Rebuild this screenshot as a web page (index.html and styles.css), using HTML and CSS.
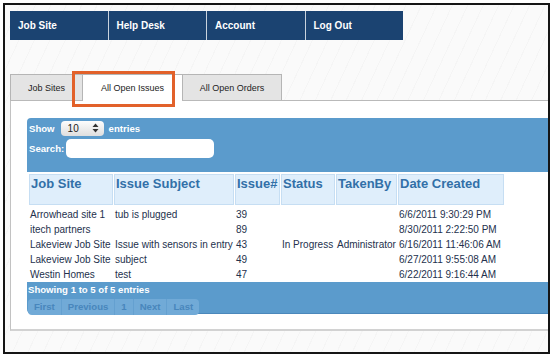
FILE: index.html
```html
<!DOCTYPE html>
<html lang="en">
<head>
    <meta charset="UTF-8">
    <meta name="viewport" content="width=device-width, initial-scale=1.0">
    <title>Open Issues</title>
    <link rel="stylesheet" href="styles.css">
</head>
<body>
    <div class="frame">
        <!-- Main menu -->
        <div class="nav">
            <a class="nav-item" href="#">Job Site</a>
            <a class="nav-item" href="#">Help Desk</a>
            <a class="nav-item" href="#">Account</a>
            <a class="nav-item" href="#">Log Out</a>
        </div>

        <!-- Tabs -->
        <div class="tabs">
            <div class="tab">Job Sites</div>
            <div class="tab active">All Open Issues</div>
            <div class="tab">All Open Orders</div>
        </div>
        <div class="highlight"></div>

        <div class="panel">
            <div class="dt-top">
                <div class="dt-row">
                    <span>Show</span>
                    <div class="select">
                        <span>10</span>
                        <svg width="7" height="10" viewBox="0 0 7 10"><path d="M3.5 0.5 L6.5 4 L0.5 4 Z M3.5 9.5 L6.5 6 L0.5 6 Z" fill="#333"/></svg>
                    </div>
                    <span>entries</span>
                </div>
                <div class="dt-row">
                    <span>Search:</span>
                    <div class="search"></div>
                </div>
            </div>

            <table class="issues">
                <thead>
                    <tr>
                        <th class="c1">Job Site</th>
                        <th class="c2">Issue Subject</th>
                        <th class="c3">Issue#</th>
                        <th class="c4">Status</th>
                        <th class="c5">TakenBy</th>
                        <th class="c6">Date Created</th>
                    </tr>
                </thead>
                <tbody>
                    <tr class="first"><td>Arrowhead site 1</td><td>tub is plugged</td><td>39</td><td></td><td></td><td>6/6/2011 9:30:29 PM</td></tr>
                    <tr><td>itech partners</td><td></td><td>89</td><td></td><td></td><td>8/30/2011 2:22:50 PM</td></tr>
                    <tr><td>Lakeview Job Site</td><td>Issue with sensors in entry</td><td>43</td><td>In Progress</td><td>Administrator</td><td>6/16/2011 11:46:06 AM</td></tr>
                    <tr><td>Lakeview Job Site</td><td>subject</td><td>49</td><td></td><td></td><td>6/27/2011 9:55:08 AM</td></tr>
                    <tr><td>Westin Homes</td><td>test</td><td>47</td><td></td><td></td><td>6/22/2011 9:16:44 AM</td></tr>
                </tbody>
            </table>

            <div class="dt-bottom">
                <div class="info">Showing 1 to 5 of 5 entries</div>
                <div class="pager">
                    <span>First</span>
                    <span>Previous</span>
                    <span>1</span>
                    <span>Next</span>
                    <span>Last</span>
                </div>
            </div>
        </div>
    </div>
</body>
</html>
```

FILE: styles.css
```css
body {
    margin: 0;
    background: #fff;
    font-family: "Liberation Sans", Arial, sans-serif;
}
.frame {
    position: relative;
    margin: 3px;
    width: 538px;
    height: 341px;
    padding: 6px 0 0 5px;
    border: 2px solid #151515;
    overflow: hidden;
    background-color: #fafafa;
    background-image: repeating-linear-gradient(115deg, rgba(255,255,255,0) 0 13px, rgba(0,0,0,0.018) 13px 14px);
}
/* Main menu */
.nav {
    display: flex;
    width: 393px;
    height: 29px;
    background: #1b4371;
}
.nav-item {
    flex: 1;
    color: #fff;
    font-weight: bold;
    font-size: 10px;
    text-decoration: none;
    padding: 9px 0 0 8px;
    border-left: 1px solid #c9d3de;
}
.nav-item:first-child {
    border-left: none;
}
/* Tabs */
.tabs {
    display: flex;
    margin-top: 34px;
    height: 26px;
    border-bottom: 1px solid #b9b9b9;
    width: 560px;
}
.tab {
    width: 72px;
    box-sizing: border-box;
    background: #e4e4e4;
    border: 1px solid #b5b5b5;
    border-bottom: none;
    border-right: none;
    font-size: 9px;
    color: #222;
    text-align: center;
    line-height: 26px;
}
.tab:last-child {
    border-right: 1px solid #b5b5b5;
}
.tab.active,
.tab:last-child {
    width: 100px;
}
.tab.active {
    background: #fff;
    height: 27px;
}
.highlight {
    position: absolute;
    left: 67px;
    top: 66px;
    width: 103px;
    height: 36px;
    box-sizing: border-box;
    border: 3px solid #e2612a;
}
/* Panel */
.panel {
    width: 560px;
    height: 211px;
    background: #fff;
    border-left: 1px solid #c2c2c2;
    border-bottom: 2px solid #d2d2d2;
    padding: 17px 0 0 16px;
}
.dt-top {
    background: #5b9bcc;
    border-radius: 4px 0 0 0;
    height: 54px;
    box-sizing: border-box;
    padding: 2px 0 0 2px;
    color: #fff;
    font-weight: bold;
    font-size: 9.6px;
}
.dt-row {
    display: flex;
    align-items: center;
    gap: 5px;
    height: 16px;
}
.dt-row + .dt-row {
    margin-top: 3px;
    height: 19px;
    gap: 2px;
}
.select {
    display: flex;
    align-items: center;
    justify-content: space-between;
    width: 43px;
    height: 15px;
    box-sizing: border-box;
    padding: 0 5px 0 7px;
    border-radius: 4px;
    background: linear-gradient(#fdfdfd, #dedede);
    color: #222;
    font-weight: normal;
    font-size: 10px;
    margin-left: 1px;
}
.search {
    width: 148px;
    height: 19px;
    background: #fff;
    border-radius: 5px;
}
/* Table */
.issues {
    border-collapse: separate;
    border-spacing: 1px 0;
    table-layout: fixed;
    margin: 2px 0 0 1px;
    font-size: 10px;
    color: #24314d;
}
.issues th {
    background: #dfeefb;
    border: 1px solid #c6def3;
    color: #3270a8;
    font-size: 13px;
    font-weight: bold;
    text-align: left;
    vertical-align: top;
    height: 31px;
    box-sizing: border-box;
    padding: 1px 1px 0 1px;
    white-space: nowrap;
}
.c1 { width: 84px; }
.c2 { width: 120px; }
.c3 { width: 45px; }
.c4 { width: 54px; }
.c5 { width: 61px; }
.c6 { width: 106px; }
.issues td {
    height: 15px;
    padding: 0 0 0 1px;
    white-space: nowrap;
}
.issues tr.first td {
    padding-top: 2px;
}
/* Footer */
.dt-bottom {
    background: #5b9bcc;
    border-bottom: 1px solid #4b88bb;
    border-radius: 0 0 0 5px;
    height: 32px;
    box-sizing: border-box;
    padding: 2px 0 0 1px;
}
.info {
    color: #fff;
    font-weight: bold;
    font-size: 9.6px;
    line-height: 12px;
}
.pager {
    display: inline-flex;
    margin-top: 1px;
    height: 16px;
    background: #71aad7;
    border-radius: 4px;
}
.pager span {
    padding: 0 6px;
    line-height: 16px;
    font-size: 9.6px;
    font-weight: bold;
    color: #4886bc;
    border-left: 1px solid #64a0d0;
}
.pager span:first-child {
    border-left: none;
}
```
